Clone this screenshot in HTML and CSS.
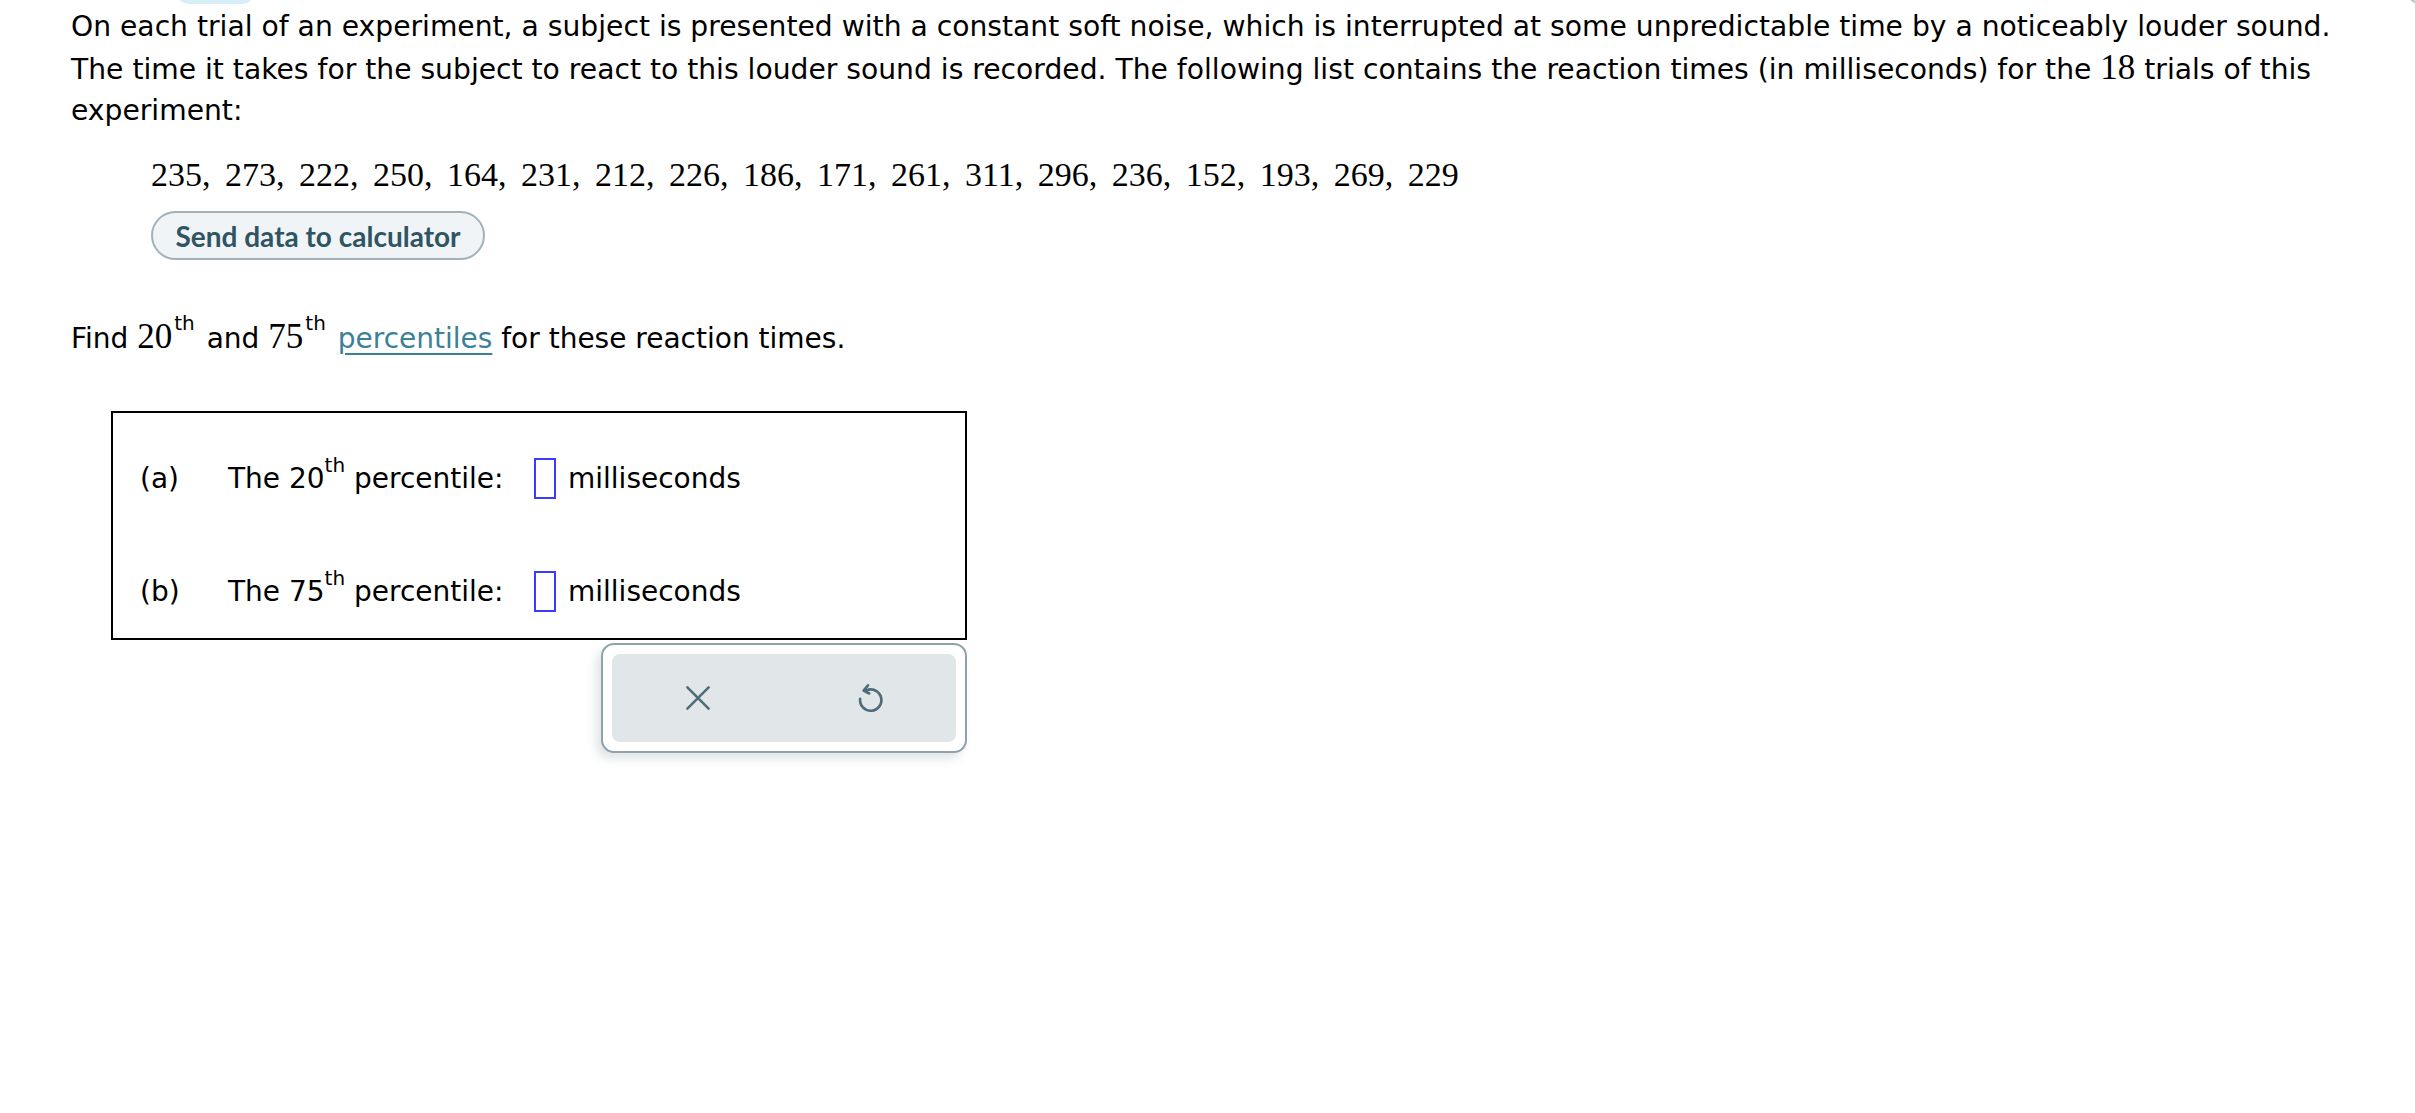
FILE: index.html
```html
<!DOCTYPE html>
<html>
<head>
<meta charset="utf-8">
<link rel="stylesheet" href="styles.css">
</head>
<body>
<div class="top-tab"></div>
<div class="top-circle"></div>
<main class="page">
  <p class="intro">On each trial of an experiment, a subject is presented with a constant soft noise, which is interrupted at some unpredictable time by a noticeably louder sound.<br>The time it takes for the subject to react to this louder sound is recorded. The following list contains the reaction times (in milliseconds) for the <span class="num">18</span> trials of this<br>experiment:</p>
  <div class="data">
    <div class="values">235, 273, 222, 250, 164, 231, 212, 226, 186, 171, 261, 311, 296, 236, 152, 193, 269, 229</div>
    <button class="send">Send data to calculator</button>
  </div>
  <p class="find">Find <span class="num">20</span><sup>th</sup> and <span class="num">75</span><sup>th</sup> <a class="link" href="#">percentiles</a> for these reaction times.</p>
  <div class="answers">
    <div class="row"><span class="label">(a)</span><span class="q">The 20<sup>th</sup> percentile:</span><span class="input"></span><span>milliseconds</span></div>
    <div class="row"><span class="label">(b)</span><span class="q">The 75<sup>th</sup> percentile:</span><span class="input"></span><span>milliseconds</span></div>
  </div>
  <div class="actions-wrap">
    <div class="actions">
      <div class="inner">
        <svg class="icon" viewBox="0 0 24 24" width="30" height="30"><path d="M3.5 3.5 L20.5 20.5 M20.5 3.5 L3.5 20.5" fill="none" stroke="#4e6c79" stroke-width="2" stroke-linecap="round"/></svg>
        <svg class="icon" viewBox="0 0 24 24" width="32" height="32"><path d="M9.2 6.3 A8 8 0 1 1 4.6 12.6" fill="none" stroke="#4e6c79" stroke-width="2" stroke-linecap="round"/><path d="M10.5 2.5 L7.2 6.4 L11.4 8.6" fill="none" stroke="#4e6c79" stroke-width="2" stroke-linecap="round" stroke-linejoin="round"/></svg>
      </div>
    </div>
  </div>
</main>
</body>
</html>
```
FILE: styles.css
```css
html, body {
  margin: 0;
  padding: 0;
  background: #fff;
}
body {
  font-family: "DejaVu Sans", Verdana, sans-serif;
  color: #000;
  position: relative;
  min-height: 1113px;
  overflow: hidden;
}
.top-tab {
  position: absolute;
  left: 178px;
  top: -20px;
  width: 75px;
  height: 24px;
  background: #d6eef5;
  border-radius: 10px;
}
.top-circle {
  position: absolute;
  left: 2397px;
  top: -60px;
  width: 70px;
  height: 64px;
  border: 2px solid #b7c6cd;
  border-radius: 50%;
}
.page {
  padding: 6px 0 0 71px;
}
.intro {
  margin: 0;
  font-size: 28.2px;
  line-height: 41px;
}
.num {
  font-family: "Liberation Serif", "Times New Roman", serif;
  font-size: 35px;
}
.data {
  margin: 24px 0 0 80px;
}
.values {
  font-family: "Liberation Serif", "Times New Roman", serif;
  font-size: 34px;
  line-height: 40px;
  word-spacing: 6px;
}
.send {
  margin-top: 16px;
  width: 334px;
  height: 49px;
  border: 2px solid #a3b2b9;
  border-radius: 25px;
  background: #f1f4f6;
  color: #2f5564;
  font-family: Lato, "Open Sans", sans-serif;
  font-weight: 700;
  font-size: 28px;
  padding: 0;
  display: flex;
  align-items: center;
  justify-content: center;
}
.find {
  margin: 56px 0 0 0;
  font-size: 28px;
  line-height: 41px;
}
sup {
  font-size: 20px;
  line-height: 0;
  vertical-align: 0;
  position: relative;
  top: -16px;
}
.find sup {
  top: -18px;
  margin-left: 2px;
  margin-right: 3px;
}
.link {
  color: #3c8198;
  text-decoration: underline;
  text-underline-offset: 5px;
  text-decoration-thickness: 2px;
}
.answers {
  margin: 52px 0 0 40px;
  width: 856px;
  height: 229px;
  border: 2px solid #000;
  padding: 44px 0 0 27px;
  box-sizing: border-box;
  display: flex;
  flex-direction: column;
  gap: 71px;
  font-size: 28px;
}
.row {
  display: flex;
  align-items: center;
  height: 42px;
}
.label {
  width: 88px;
}
.q {
  width: 306px;
}
.input {
  width: 18px;
  height: 37px;
  border: 2px solid #3b3bff;
  margin-right: 12px;
}
.actions-wrap {
  display: flex;
  margin-left: 530px;
  margin-top: 3px;
}
.actions {
  width: 366px;
  height: 110px;
  box-sizing: border-box;
  border: 2px solid #8ea2ab;
  border-radius: 13px;
  background: #fff;
  padding: 9px;
  box-shadow: -5px 6px 10px rgba(60, 80, 90, 0.15);
}
.inner {
  height: 100%;
  background: #e1e6e9;
  border-radius: 8px;
  display: flex;
  align-items: center;
  justify-content: space-around;
}
.icon {
  display: block;
}
```
